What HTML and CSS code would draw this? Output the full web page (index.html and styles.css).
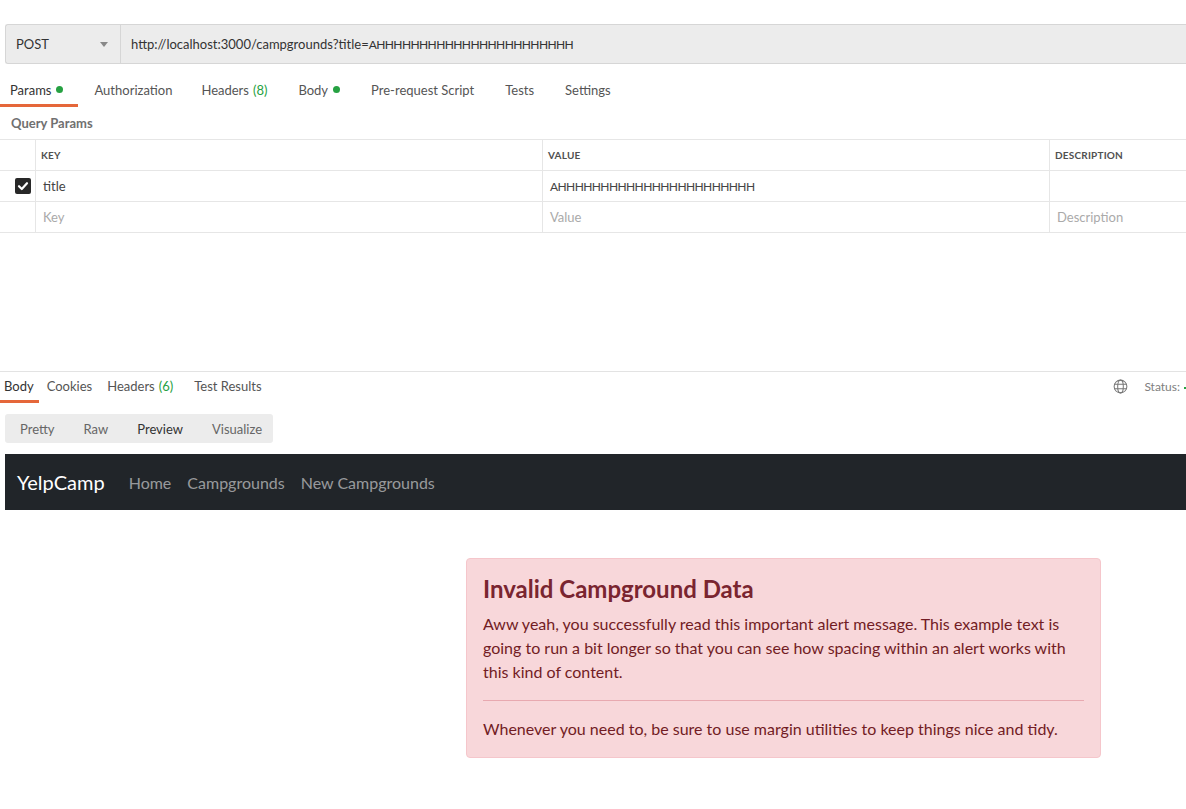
FILE: index.html
```html
<!DOCTYPE html>
<html>
<head>
<meta charset="utf-8">
<link rel="stylesheet" href="styles.css">
</head>
<body>
<div class="app">
  <div class="topstrip"></div>
  <div class="urlbar">
    <div class="method"><span>POST</span><span class="caret"></span></div>
    <div class="url">http://localhost:3000/campgrounds?title=<span class="hs">AHHHHHHHHHHHHHHHHHHHHHHH</span></div>
  </div>
  <div class="tabs req-tabs">
    <div class="tab active">Params <span class="dot"></span></div>
    <div class="tab">Authorization</div>
    <div class="tab">Headers <span class="count">(8)</span></div>
    <div class="tab">Body <span class="dot"></span></div>
    <div class="tab">Pre-request Script</div>
    <div class="tab">Tests</div>
    <div class="tab">Settings</div>
  </div>
  <div class="qp-title">Query Params</div>
  <div class="ptable">
    <div class="row head">
      <div class="cell chk"></div>
      <div class="cell">KEY</div>
      <div class="cell">VALUE</div>
      <div class="cell">DESCRIPTION</div>
    </div>
    <div class="row">
      <div class="cell chk"><span class="checkbox"><svg width="12" height="12" viewBox="0 0 12 12"><path d="M2 6.2 L4.8 9 L10 3.2" fill="none" stroke="#fff" stroke-width="2.2" stroke-linecap="round" stroke-linejoin="round"/></svg></span></div>
      <div class="cell">title</div>
      <div class="cell"><span class="hs">AHHHHHHHHHHHHHHHHHHHHHHH</span></div>
      <div class="cell"></div>
    </div>
    <div class="row">
      <div class="cell chk"></div>
      <div class="cell ph">Key</div>
      <div class="cell ph">Value</div>
      <div class="cell ph">Description</div>
    </div>
  </div>
  <div class="spacer"></div>
  <div class="resp-bar">
    <div class="tabs resp-tabs">
      <div class="tab active">Body</div>
      <div class="tab">Cookies</div>
      <div class="tab">Headers <span class="count">(6)</span></div>
      <div class="tab">Test Results</div>
    </div>
    <div class="status">
      <svg class="globe" width="15" height="15" viewBox="0 0 16 16"><g fill="none" stroke="#777" stroke-width="1.1"><circle cx="8" cy="8" r="6.8"/><ellipse cx="8" cy="8" rx="3" ry="6.8"/><path d="M1.3 5.6 H14.7 M1.3 10.4 H14.7"/></g></svg>
      <span class="status-label">Status:</span>
      <span class="code-bit"></span>
    </div>
  </div>
  <div class="seg">
    <div class="seg-item">Pretty</div>
    <div class="seg-item">Raw</div>
    <div class="seg-item sel">Preview</div>
    <div class="seg-item">Visualize</div>
  </div>
  <div class="preview">
    <nav class="navbar">
      <span class="brand">YelpCamp</span>
      <span class="nav-link">Home</span>
      <span class="nav-link">Campgrounds</span>
      <span class="nav-link">New Campgrounds</span>
    </nav>
    <div class="alert">
      <h4 class="alert-title">Invalid Campground Data</h4>
      <p class="alert-p">Aww yeah, you successfully read this important alert message. This example text is going to run a bit longer so that you can see how spacing within an alert works with this kind of content.</p>
      <hr class="alert-hr">
      <p class="alert-p last">Whenever you need to, be sure to use margin utilities to keep things nice and tidy.</p>
    </div>
  </div>
</div>
</body>
</html>
```
FILE: styles.css
```css
html, body {
  margin: 0;
  padding: 0;
  background: #fff;
  overflow: hidden;
}
.app {
  width: 1186px;
  height: 809px;
  overflow: hidden;
  font-family: "Lato", "Open Sans", sans-serif;
  color: #505050;
  font-size: 13px;
}
.topstrip {
  height: 24px;
}
.urlbar {
  margin-left: 5px;
  height: 38px;
  display: flex;
  background: #ececec;
  border: 1px solid #d6d6d6;
  border-right: none;
  border-radius: 3px 0 0 3px;
}
.method {
  width: 115px;
  border-right: 1px solid #d6d6d6;
  display: flex;
  align-items: center;
  justify-content: space-between;
  padding: 0 12px 0 10px;
  box-sizing: border-box;
  color: #333;
  font-size: 13px;
}
.caret {
  width: 0;
  height: 0;
  border-left: 4px solid transparent;
  border-right: 4px solid transparent;
  border-top: 5px solid #888;
}
.url {
  display: flex;
  align-items: center;
  padding-left: 10px;
  color: #333;
  font-size: 13px;
  white-space: pre;
}
.hs {
  font-size: 12px;
  letter-spacing: -0.6px;
}
.tabs {
  display: flex;
}
.req-tabs {
  margin-top: 14px;
  height: 29px;
}
.tab {
  display: flex;
  align-items: center;
  color: #555;
  white-space: nowrap;
  box-sizing: border-box;
  border-bottom: 3px solid transparent;
}
.req-tabs .tab {
  padding: 0 15px 3px 10px;
  margin-right: 6px;
}
.req-tabs .tab:nth-child(2) {
  margin-right: 4px;
}
.req-tabs .tab.active {
  border-bottom-color: #e5673a;
  color: #333;
}
.dot {
  display: inline-block;
  width: 7px;
  height: 7px;
  border-radius: 50%;
  background: #26a142;
  margin-left: 5px;
}
.count {
  color: #26a142;
  margin-left: 4px;
}
.qp-title {
  height: 32px;
  display: flex;
  align-items: center;
  padding-left: 11px;
  color: #707070;
  font-weight: 700;
  font-size: 13px;
}
.ptable {
  border-top: 1px solid #e6e6e6;
}
.row {
  display: grid;
  grid-template-columns: 35px 507px 507px 1fr;
  height: 31px;
  border-bottom: 1px solid #e6e6e6;
  box-sizing: border-box;
}
.cell {
  display: flex;
  align-items: center;
  padding-left: 7px;
  border-left: 1px solid #e6e6e6;
  color: #444;
  font-size: 13px;
  white-space: nowrap;
}
.cell.chk {
  border-left: none;
  padding-left: 15px;
}
.head .cell {
  font-size: 10px;
  font-weight: 700;
  color: #505050;
  letter-spacing: 0.2px;
  padding-left: 5px;
}
.cell.ph {
  color: #aaa;
}
.checkbox {
  width: 16px;
  height: 16px;
  border-radius: 2px;
  background: #282828;
  display: flex;
  align-items: center;
  justify-content: center;
}
.spacer {
  height: 138px;
  border-bottom: 1px solid #e3e3e3;
}
.resp-bar {
  display: flex;
  justify-content: space-between;
  height: 31px;
}
.resp-tabs .tab {
  padding: 0 5px 0 4px;
  margin-right: 4px;
}
.resp-tabs .tab:nth-child(2) {
  margin-right: 6px;
}
.resp-tabs .tab:nth-child(3) {
  margin-right: 12px;
}
.resp-tabs .tab.active {
  border-bottom-color: #e5673a;
  color: #333;
}
.status {
  display: flex;
  align-items: center;
  white-space: nowrap;
  padding-bottom: 2px;
}
.globe {
  margin-right: 16px;
}
.status-label {
  color: #808080;
  font-size: 12px;
}
.code-bit {
  width: 2px;
  height: 2px;
  background: #26a142;
  margin-left: 4px;
  margin-top: 2px;
}
.seg {
  margin: 11px 0 0 5px;
  width: 268px;
  height: 29px;
  background: #ececec;
  border-radius: 3px;
  display: flex;
  align-items: center;
  padding-left: 15px;
  box-sizing: border-box;
}
.seg-item {
  color: #666;
  margin-right: 29px;
}
.seg-item.sel {
  color: #333;
}
.preview {
  margin: 11px 0 0 5px;
}
.navbar {
  height: 56px;
  background: #212529;
  display: flex;
  align-items: center;
  padding-left: 12px;
}
.brand {
  color: #fff;
  font-size: 20px;
  margin-right: 16px;
}
.nav-link {
  color: rgba(255, 255, 255, 0.55);
  font-size: 16px;
  padding: 0 8px;
}
.alert {
  margin: 48px 0 0 461px;
  width: 635px;
  box-sizing: border-box;
  background: #f8d7da;
  border: 1px solid #f5c6cb;
  border-radius: 4px;
  color: #721c24;
  padding: 16px;
}
.alert-title {
  margin: 0 0 8px;
  font-size: 24px;
  font-weight: 700;
  line-height: 1.2;
  color: #7a2530;
}
.alert-p {
  margin: 0 0 16px;
  font-size: 16px;
  line-height: 24px;
}
.alert-p.last {
  margin-bottom: 0;
}
.alert-hr {
  margin: 0 0 16px;
  border: 0;
  border-top: 1px solid #e8a9b0;
}
```
